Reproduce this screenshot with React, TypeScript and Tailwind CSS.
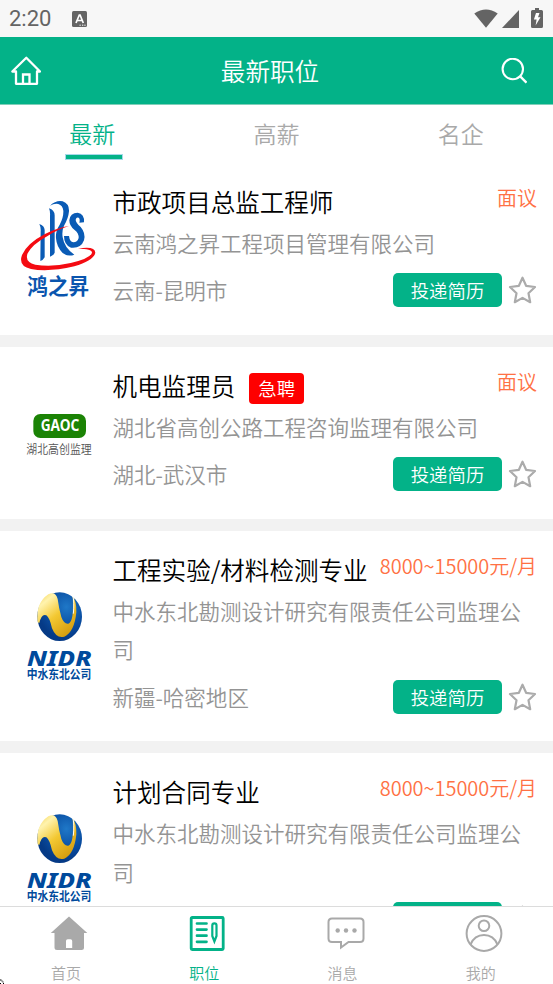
import type { ReactNode } from 'react';

type LogoName = 'hzs' | 'gaoc' | 'nidr';

type Job = {
  id: number;
  title: string;
  company: string;
  place: string;
  salary: string;
  logo: LogoName;
  urgent?: boolean;
};

const jobs: Job[] = [
  { id: 1, title: '市政项目总监工程师', company: '云南鸿之昇工程项目管理有限公司', place: '云南-昆明市', salary: '面议', logo: 'hzs' },
  { id: 2, title: '机电监理员', company: '湖北省高创公路工程咨询监理有限公司', place: '湖北-武汉市', salary: '面议', logo: 'gaoc', urgent: true },
  { id: 3, title: '工程实验/材料检测专业', company: '中水东北勘测设计研究有限责任公司监理公司', place: '新疆-哈密地区', salary: '8000~15000元/月', logo: 'nidr' },
  { id: 4, title: '计划合同专业', company: '中水东北勘测设计研究有限责任公司监理公司', place: '新疆-哈密地区', salary: '8000~15000元/月', logo: 'nidr' },
];

const tabs = ['最新', '高薪', '名企'];

function HzsLogo() {
  return (
    <svg viewBox="0 -2 300 345" className="h-[115px] w-[100px]">
      <g fill="#0a5bb5">
        <path d="M88 100 Q103 105 104 118 L104 200 Q100 208 91 211 L92 122 Q93 110 88 100Z" />
        <path d="M117 53 Q133 57 134 74 L134 186 Q130 195 120 198 L120 76 Q121 62 117 53Z" />
        <path d="M120 45 Q138 28 158 32 Q178 39 177 62 Q175 84 162 105 Q155 122 158 140 Q163 172 193 192 Q174 199 158 187 Q140 169 138 143 Q136 122 149 102 Q161 80 160 60 Q158 44 145 40 Q132 38 120 45Z" />
        <path d="M222 95 Q224 69 203 66 Q180 66 178 89 Q178 106 193 117 Q207 127 206 142 Q202 155 190 155 Q179 153 177 136 L162 136 Q162 163 183 171 Q213 174 222 149 Q228 128 212 109 Q197 96 197 87 Q199 78 206 81 Q211 85 208 96Z" />
      </g>
      <path
        fill="#f40b12"
        d="M177 106 Q146 115 114 135 Q66 161 53 188 Q43 214 76 222 Q126 230 182 217 Q242 203 246 186 Q246 174 204 174 Q255 165 256 186 Q252 209 193 227 Q116 245 63 235 Q24 227 36 193 Q51 158 105 130 Q145 110 177 106Z"
      />
      <text x="52" y="311" fontSize="65" fontWeight="700" fill="#0a55ae" textLength="185" lengthAdjust="spacingAndGlyphs">鸿之昇</text>
    </svg>
  );
}

function GaocLogo() {
  return (
    <svg viewBox="0 0 300 345" className="h-[115px] w-[100px]">
      <rect x="70" y="120" width="158" height="72" rx="21" fill="#1b8305" />
      <text x="92" y="172" fontSize="47" fontWeight="700" fill="#fff" textLength="116" lengthAdjust="spacingAndGlyphs" fontFamily="Noto Sans, sans-serif">GAOC</text>
      <text x="49" y="239" fontSize="37" fill="#555" textLength="196" lengthAdjust="spacingAndGlyphs">湖北高创监理</text>
    </svg>
  );
}

function NidrLogo({ id }: { id: number }) {
  return (
    <svg viewBox="0 -6 300 345" className="h-[115px] w-[100px]">
      <defs>
        <radialGradient id={`blue${id}`} cx="0.65" cy="0.3" r="0.65">
          <stop offset="0" stopColor="#1f78c8" />
          <stop offset="0.6" stopColor="#0a4fa3" />
          <stop offset="1" stopColor="#053a86" />
        </radialGradient>
        <linearGradient id={`gold${id}`} x1="0" y1="0" x2="0.75" y2="1">
          <stop offset="0" stopColor="#f5cf45" />
          <stop offset="0.22" stopColor="#fff3ae" />
          <stop offset="0.55" stopColor="#f3c832" />
          <stop offset="1" stopColor="#d39a0c" />
        </linearGradient>
      </defs>
      <ellipse cx="149" cy="113" rx="67" ry="73" fill={`url(#blue${id})`} />
      <path
        fill={`url(#gold${id})`}
        d="M83 130 Q76 72 115 46 Q137 36 143 60 Q146 84 154 114 Q162 136 175 134 Q193 128 188 52 Q200 68 199 100 Q193 160 163 173 Q139 180 126 148 Q119 116 109 109 Q95 102 88 132Z"
      />
      <path fill="none" stroke="#fff" strokeWidth="3" d="M188 48 Q194 69 190 104" />
      <text x="51" y="262" fontSize="62" fontWeight="800" fontStyle="italic" fill="#004a9c" textLength="194" lengthAdjust="spacingAndGlyphs" fontFamily="Noto Sans, sans-serif">NIDR</text>
      <text x="50" y="301" fontSize="36" fontWeight="700" fill="#004a9c" textLength="194" lengthAdjust="spacingAndGlyphs">中水东北公司</text>
    </svg>
  );
}

function StatusBar() {
  return (
    <div className="flex h-[37px] shrink-0 items-center bg-[#f7f7f7] pl-[9px] pr-[10px] text-[#646464]">
      <span className="w-[63px] font-[Roboto] text-[22px] font-[450] leading-none">2:20</span>
      <svg viewBox="0 0 15 16" className="h-4 w-[15px]">
        <rect width="15" height="16" rx="1.5" fill="#646464" />
        <path d="M4 12 7.3 4h.8l3.2 8M5.2 9.5h4.6" fill="none" stroke="#fff" strokeWidth="1.7" />
        <path d="M7.5 14.2h1.3M10 14.2h1.3M12.3 14.2h1.3" stroke="#fff" strokeWidth="1" />
      </svg>
      <div className="ml-auto flex items-center">
        <svg viewBox="0 0 24 19" className="-mt-px h-[19px] w-6" fill="currentColor">
          <path d="M.3 4.5Q12-3.5 23.7 4.5L12 18.7Z" />
        </svg>
        <svg viewBox="0 0 17 18" className="ml-1 mt-px h-[18px] w-[17px]" fill="currentColor">
          <path d="M17 0v18H0Z" />
        </svg>
        <svg viewBox="0 0 12 20" className="-mt-0.5 ml-3 h-5 w-3">
          <path fill="currentColor" d="M4 0h4v2h2.5Q12 2 12 3.5v15Q12 20 10.500 20h-9Q0 20 0 18.500v-15Q0 2 1.500 2H4Z" />
          <path fill="#fff" d="M5 5h3.500L7 9.300h2.500L4.600 17.500 5.600 11.500H2.900Z" />
        </svg>
      </div>
    </div>
  );
}

function Header() {
  return (
    <header className="flex h-[68px] shrink-0 items-center justify-between border-b border-[#7fcfb9] bg-[#03b288] pl-[11px] pr-[26px] text-white">
      <svg viewBox="0 0 30 30" className="h-[30px] w-[30px]" fill="none" stroke="currentColor" strokeWidth="2.3" strokeLinejoin="round">
        <path d="M5 15.500H1.300L15.300 1.800 29 15.500H26V27.800H5Z" />
        <path d="M12 28V18.500h6.500V28" strokeLinejoin="miter" />
      </svg>
      <h1 className="pr-0.5 text-[24.6px] leading-none">最新职位</h1>
      <svg viewBox="0 0 26 26" className="h-[26px] w-[26px]" fill="none" stroke="currentColor" strokeWidth="2.1">
        <circle cx="11.800" cy="11" r="10.200" />
        <path d="m18.700 17.900 6.800 6.800" strokeWidth="2.400" />
      </svg>
    </header>
  );
}

function Star() {
  return (
    <svg viewBox="0 0 28 28" className="h-7 w-7" fill="none" stroke="#ababab" strokeWidth="2.200" strokeLinejoin="round">
      <path d="M14.500 1.700 18.100 9.800 27 11 20.500 17.200 22.200 26.200 14.500 21.900 6.800 26.200 8.500 17.200 2 11 10.900 9.800Z" />
    </svg>
  );
}

function JobCard({ job }: { job: Job }) {
  return (
    <li className="flex items-center bg-white pl-2.5">
      <div className="-mt-1 w-[102.5px] shrink-0">
        {job.logo === 'hzs' && <HzsLogo />}
        {job.logo === 'gaoc' && <GaocLogo />}
        {job.logo === 'nidr' && <NidrLogo id={job.id} />}
      </div>
      <div className="min-w-0 flex-1 pb-[27.6px] pt-5">
        <div className="flex h-[38px] items-center whitespace-nowrap pr-4">
          <h2 className="text-[24.55px] text-black">{job.title}</h2>
          {job.urgent && (
            <span className="ml-3.5 mt-1 h-[31px] rounded bg-[#fe0000] px-[9px] text-[18.4px] leading-[30px] text-white">急聘</span>
          )}
          <span className="mb-[9px] ml-auto text-[19.97px] text-[#ff7144]">{job.salary}</span>
        </div>
        <p className="mt-[3px] pr-4 text-[21.5px] leading-[38.4px] text-[#949494]">{job.company}</p>
        <div className="mt-[11px] flex h-[34px] items-center pr-[17px]">
          <span className="text-[21.5px] text-[#949494]">{job.place}</span>
          <button type="button" className="ml-auto h-[34px] w-[109px] rounded-[5px] bg-[#03b288] text-[18.4px] leading-[34px] text-white">
            投递简历
          </button>
          <span className="ml-1.5">
            <Star />
          </span>
        </div>
      </div>
    </li>
  );
}

function NavItem({ label, active, children }: { label: string; active?: boolean; children: ReactNode }) {
  return (
    <a className={active ? 'flex flex-1 flex-col items-center text-[#03b288]' : 'flex flex-1 flex-col items-center text-[#a9a9a9]'}>
      <svg viewBox="0 0 38 38" className="mt-2 h-[38px] w-[38px]" fill="none" stroke="currentColor" strokeWidth="2">
        {children}
      </svg>
      <span className="mt-2.5 pr-1.5 text-[15px] leading-[20px]">{label}</span>
    </a>
  );
}

export default function App() {
  return (
    <main className="relative flex h-[984px] w-[553px] flex-col overflow-hidden bg-white font-['Noto_Sans_CJK_SC',sans-serif] font-[350]">
      <StatusBar />
      <Header />
      <nav className="flex h-[58px] shrink-0">
        {tabs.map((tab, i) => (
          <div key={tab} className="flex flex-1 flex-col items-center">
            <span className={i === 0 ? 'h-[49px] text-[23px] leading-[56px] text-[#03b288]' : 'h-[49px] text-[23px] leading-[56px] text-[#a9a9a9]'}>{tab}</span>
            {i === 0 && <span className="ml-[3px] h-[6px] w-[58px] border border-[#a6d8ea] bg-[#03b288]" />}
          </div>
        ))}
      </nav>

      <ul className="flex min-h-0 flex-1 flex-col gap-3 overflow-hidden bg-[#f2f2f2]">
        {jobs.map((job) => (
          <JobCard key={job.id} job={job} />
        ))}
      </ul>

      <nav className="flex h-[78px] shrink-0 border-t border-[#dcdcdc] bg-white">
        <NavItem label="首页">
          <path fill="currentColor" stroke="none" d="M19 1.500 37.300 18H34v14.500q0 2.500-2.500 2.500H7q-2.500 0-2.500-2.500V18H.800Z" />
          <path fill="#fff" stroke="none" d="M16 33v-7q0-1.700 1.700-1.700h2.800q1.700 0 1.700 1.700v7Z" />
        </NavItem>
        <NavItem label="职位" active>
          <rect x="3.200" y="2.500" width="32" height="32" rx="1" strokeWidth="2.800" />
          <path d="M9 8.500h9.500M9 14.600h9.500M9 20.700h9.500M9 26.800h9.500" strokeWidth="2.700" strokeLinecap="round" />
          <path d="M24.300 10.500q0-2.200 2.100-2.200t2.100 2.200v10.500l-2.100 5.500-2.100-5.500Z" strokeWidth="2.200" />
        </NavItem>
        <NavItem label="消息">
          <path d="M5 3.500h28q3.500 0 3.500 3.500v16.500q0 3.500-3.500 3.500H21.500L14 32.500V27H5q-3.500 0-3.500-3.500V7Q1.500 3.500 5 3.500Z" />
          <g fill="currentColor" stroke="none">
            <circle cx="10.700" cy="15.500" r="2.200" />
            <circle cx="19" cy="15.500" r="2.200" />
            <circle cx="27.500" cy="15.500" r="2.200" />
          </g>
        </NavItem>
        <NavItem label="我的">
          <circle cx="19" cy="18.500" r="17.400" />
          <circle cx="19" cy="10.800" r="5.300" />
          <path d="M5.500 29.500Q9.500 20 19 20t13.500 9.500" />
        </NavItem>
      </nav>

      <svg viewBox="0 0 5 5" className="absolute bottom-0 left-0 h-[5px] w-[5px]">
        <path d="M0 1h1.500M1.500 2h1M2.500 3h1M3 4.500h1M0 4.500h1" stroke="#000" strokeWidth="1" />
      </svg>
    </main>
  );
}
